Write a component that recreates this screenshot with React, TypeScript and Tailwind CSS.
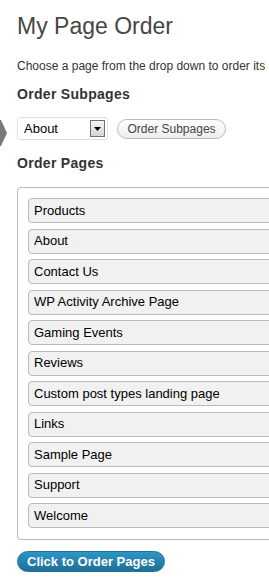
import React from 'react';

const pages = [
  'Products',
  'About',
  'Contact Us',
  'WP Activity Archive Page',
  'Gaming Events',
  'Reviews',
  'Custom post types landing page',
  'Links',
  'Sample Page',
  'Support',
  'Welcome',
];

export default function App() {
  return (
    <div className="relative w-[269px] h-[586px] overflow-hidden bg-white font-['Liberation_Sans',Arial,sans-serif] text-[#333]">
      {/* menu pointer peeking in from the sidebar */}
      <svg className="absolute left-0 top-[120px]" width="7" height="26" viewBox="0 0 7 26">
        <polygon points="0,0 1,0 7,13 1,26 0,26" fill="#7a7a7a" />
      </svg>

      <div className="w-[900px] pl-[17px] pt-[12px]">
        <h2 className="text-[23px] leading-[29px] text-[#464646]">My Page Order</h2>

        <p className="mt-[17px] whitespace-nowrap text-[12px] leading-[16px] text-[#333]">
          Choose a page from the drop down to order its subpages or order the pages on this level by dragging and dropping them into the desired order.
        </p>

        <h3 className="mt-[11px] text-[14px] leading-[18px] font-bold tracking-[0.3px] text-[#333]">Order Subpages</h3>

        <div className="mt-[14px] flex items-center gap-[9px]">
          <div className="flex h-[23px] w-[91px] items-center justify-between rounded-[3px] border border-[#dfdfdf] bg-white pl-[6px] pr-[2px]">
            <span className="text-[13px] text-[#000]">About</span>
            <span className="flex h-[17px] w-[15px] items-center justify-center border border-[#707070] bg-gradient-to-b from-[#f4f4f4] to-[#d4d4d4]">
              <svg width="7" height="4" viewBox="0 0 7 4">
                <polygon points="0,0 7,0 3.5,4" fill="#000" />
              </svg>
            </span>
          </div>
          <button className="h-[20px] rounded-full border border-[#bbb] bg-gradient-to-b from-white to-[#ededed] px-[9.5px] text-[12px] leading-[18px] text-[#464646]">
            Order Subpages
          </button>
        </div>

        <h3 className="mt-[14px] text-[14px] leading-[18px] font-bold tracking-[0.3px] text-[#333]">Order Pages</h3>

        <div className="mt-[15px] w-[400px] rounded-[4px] border border-[#bbb] px-[10px] pt-[10px] pb-[11px]">
          <ul className="flex flex-col gap-[5.5px]">
            {pages.map((p) => (
              <li
                key={p}
                className="flex h-[25px] items-center rounded-[4px] border border-[#bbb] bg-[#f1f1f1] pl-[5px] text-[13px] text-[#000]"
              >
                {p}
              </li>
            ))}
          </ul>
        </div>

        <button className="mt-[11px] h-[21px] rounded-full border border-[#20739a] bg-gradient-to-b from-[#2e95c6] to-[#1f6f96] px-[9px] text-[13px] font-bold leading-[18px] text-white">
          Click to Order Pages
        </button>
      </div>
    </div>
  );
}
